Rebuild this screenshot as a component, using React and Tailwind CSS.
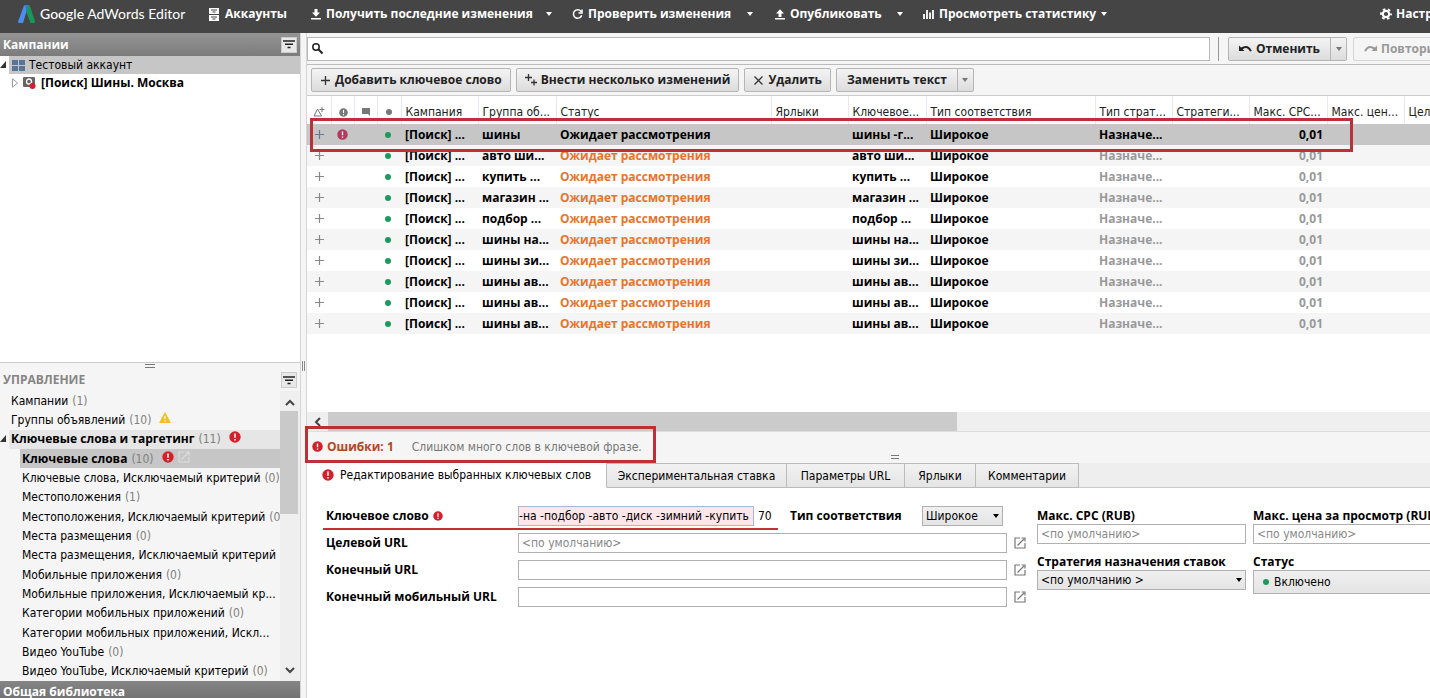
import React from 'react';

const groups = ['шины', 'авто ши...', 'купить ...', 'магазин ...', 'подбор ...', 'шины на...', 'шины зи...', 'шины ав...', 'шины ав...', 'шины ав...'];
const keywords = ['шины -г...', 'авто ши...', 'купить ...', 'магазин ...', 'подбор ...', 'шины на...', 'шины зи...', 'шины ав...', 'шины ав...', 'шины ав...'];

const manageItems = [
  { title: 'Кампании', count: '(1)' },
  { title: 'Группы объявлений', count: '(10)', warning: true },
  { title: 'Ключевые слова и таргетинг', count: '(11)', error: true, open: true },
  { title: 'Ключевые слова', count: '(10)', error: true, selected: true, nested: true },
  { title: 'Ключевые слова, Исключаемый критерий', count: '(0)', nested: true },
  { title: 'Местоположения', count: '(1)', nested: true },
  { title: 'Местоположения, Исключаемый критерий', count: '(0)', nested: true },
  { title: 'Места размещения', count: '(0)', nested: true },
  { title: 'Места размещения, Исключаемый критерий', count: '(0)', nested: true },
  { title: 'Мобильные приложения', count: '(0)', nested: true },
  { title: 'Мобильные приложения, Исключаемый кр...', nested: true },
  { title: 'Категории мобильных приложений', count: '(0)', nested: true },
  { title: 'Категории мобильных приложений, Искл...', nested: true },
  { title: 'Видео YouTube', count: '(0)', nested: true },
  { title: 'Видео YouTube, Исключаемый критерий', count: '(0)', nested: true },
];

function ErrorIcon({ className = 'size-3', color = '#d3202b' }) {
  return (
    <svg viewBox="0 0 12 12" className={`shrink-0 ${className}`}>
      <circle cx="6" cy="6" r="5.7" fill={color} />
      <path d="M6 2.6v4.2M6 8.1v1.5" stroke="#fff" strokeWidth="1.5" />
    </svg>
  );
}

function Caret({ className = '' }) {
  return (
    <svg viewBox="0 0 6 4" className={`w-[6px] h-1 shrink-0 ${className}`}>
      <path d="M0 0h6L3 4z" fill="currentColor" />
    </svg>
  );
}

function FilterIcon() {
  return (
    <svg viewBox="0 0 12 9" className="w-3 h-[9px]">
      <path d="M0 1h12M2 4.2h8M4.5 7.4h3" stroke="#222" strokeWidth="1.5" />
    </svg>
  );
}

function ExternalIcon({ className = 'text-[#777]' }) {
  return (
    <svg viewBox="0 0 12 12" className={`size-3 shrink-0 ${className}`} fill="none" stroke="currentColor" strokeWidth="1.2">
      <path d="M6 1H1v10h10V6M3.500 8.500l6.500-6.500M7.500 1H11v3.500" />
    </svg>
  );
}

function Dot() {
  return <span className="block size-[6px] rounded-full bg-[#1a9a5c]" />;
}

function FilterButton({ label }) {
  return (
    <button type="button" aria-label={label} className="size-4 flex items-center justify-center bg-[#e8e8e8] border border-[#ccc]">
      <FilterIcon />
    </button>
  );
}

function TopBar() {
  return (
    <header className="h-[33px] shrink-0 flex items-center bg-[#454545] text-white font-bold pl-[18px] pb-[5px] overflow-hidden whitespace-nowrap">
      <div className="flex items-center w-[191px] shrink-0 font-['Lato',sans-serif] font-normal text-[14px]">
        <svg viewBox="0 0 17 18" className="w-[17px] h-[18px] mr-[5px]">
          <path d="M7.500 0h3L5 18H1.200Q-.3 18 .1 16.500L5.600 1.400Q6.200 0 7.500 0z" fill="#4b8df0" />
          <path d="M8 0h2.600q1 0 1.400 1L17 16.500q.2 1.500-1.200 1.500H12.500L8.300 7z" fill="#17975a" />
          <path d="M7.200 0h3.300L8.300 7z" fill="#3a78c9" />
        </svg>
        <span><span className="font-medium">Google</span> AdWords Editor</span>
      </div>
      <nav className="flex items-center shrink-0">
        <button type="button" className="flex items-center gap-[6px] w-[102px]">
          <svg viewBox="0 0 10 13" className="w-[10px] h-[13px]">
            <path d="M0 0h10v6H0zM0 7h10v6H0z" fill="#fff" />
            <path d="M2 2h6M2 9h6" stroke="#454545" strokeWidth="1" />
            <path d="M3.500 4h3M3.500 11h3" stroke="#454545" strokeWidth="1.200" />
          </svg>
          Аккаунты
        </button>
        <button type="button" className="flex items-center gap-[5px] w-[235px]">
          <svg viewBox="0 0 10 11" className="w-[10px] h-[11px]">
            <path d="M3.500 0h3v3.500H9L5 7.800 1 3.500h2.500zM0 9h10v1.600H0z" fill="#fff" />
          </svg>
          Получить последние изменения
        </button>
        <Caret className="mr-5" />
        <button type="button" className="flex items-center gap-[5px] w-[175px]">
          <svg viewBox="0 0 11 11" className="size-[11px]" fill="none" stroke="#fff" strokeWidth="1.500">
            <path d="M9 2.500A4.200 4.200 0 1 0 9.700 6.200M10 .5v3.500H6.500" />
          </svg>
          Проверить изменения
        </button>
        <Caret className="mr-[22px]" />
        <button type="button" className="flex items-center gap-[5px] w-[122px]">
          <svg viewBox="0 0 10 11" className="w-[10px] h-[11px]">
            <path d="M3.500 8h3V4.500H9L5 .2 1 4.500h2.500zM0 9h10v1.600H0z" fill="#fff" />
          </svg>
          Опубликовать
        </button>
        <Caret className="mr-5" />
        <button type="button" className="flex items-center gap-[5px]">
          <svg viewBox="0 0 11 10" className="w-[11px] h-[10px]">
            <path d="M1 10V5M4 10V1M7 10V3.500M10 10V1" stroke="#fff" strokeWidth="1.800" />
          </svg>
          Просмотреть статистику
          <Caret />
        </button>
      </nav>
      <div className="w-[50px] ml-auto shrink-0 overflow-hidden">
        <button type="button" className="flex items-center gap-1">
          <svg viewBox="0 0 12 12" className="size-3 shrink-0" fill="none" stroke="#fff">
            <circle cx="6" cy="6" r="3.200" strokeWidth="2.200" />
            <circle cx="6" cy="6" r="5" strokeWidth="1.800" strokeDasharray="2.600 2.636" strokeDashoffset="1.300" />
          </svg>
          Настройки
        </button>
      </div>
    </header>
  );
}

function CampaignTree() {
  return (
    <section className="flex-1 min-h-0 bg-white">
      <h2 className="h-[23px] flex items-center justify-between px-[3px] font-bold text-white bg-linear-to-b from-[#949494] to-[#7c7c7c]">
        Кампании
        <FilterButton label="Фильтр кампаний" />
      </h2>
      <div className="flex h-[18px]">
        <svg viewBox="0 0 9 18" className="w-[9px]"><path d="M6 5v7H0z" fill="#333" /></svg>
        <button type="button" className="flex-1 flex items-center gap-1 pl-[3px] bg-[#c6c6c6]">
          <svg viewBox="0 0 13 11" className="w-[13px] h-[11px]">
            <path d="M0 0h6v5H0zM7 0h6v5H7zM0 6h6v5H0zM7 6h6v5H7z" fill="#587597" />
          </svg>
          Тестовый аккаунт
        </button>
      </div>
      <button type="button" className="flex items-center h-[18px] pl-3 font-bold">
        <svg viewBox="0 0 6 10" className="w-[6px] h-[10px] mr-[5px]"><path d="M.5.800v8.400L5.500 5z" fill="#fff" stroke="#999" /></svg>
        <svg viewBox="0 0 14 13" className="w-[14px] h-[13px] mr-1">
          <rect width="12" height="10" rx="1" fill="#666" />
          <circle cx="6" cy="4.500" r="2.500" fill="none" stroke="#fff" strokeWidth="1.300" />
          <circle cx="9.500" cy="9" r="3" fill="#d3202b" />
        </svg>
        [Поиск] Шины. Москва
      </button>
    </section>
  );
}

function ManageItem({ item }) {
  return (
    <li className={`flex-1 min-h-0 flex ${item.nested ? 'pl-5' : ''}`}>
      {!item.nested && (
        <svg viewBox="0 0 9 18" className="w-[9px] h-[18px] shrink-0">
          {item.open && <path d="M6 5v7H0z" fill="#333" />}
        </svg>
      )}
      <button
        type="button"
        className={`flex-1 flex items-center gap-1 pl-[2px] text-left whitespace-nowrap overflow-hidden ${item.selected ? 'bg-[#c6c6c6]' : ''} ${item.open ? 'bg-[#e6e6e6]' : ''}`}
      >
        <span className={item.open || item.selected ? 'font-bold' : ''}>{item.title}</span>
        {item.count && <span className="text-[#808080]">{item.count}</span>}
        {item.warning && (
          <svg viewBox="0 0 12 11" className="w-3 h-[11px] ml-1 mb-1 shrink-0">
            <path d="M6 0l6 11H0z" fill="#f9be1c" />
            <path d="M6 4v3M6 8v1.500" stroke="#fff" strokeWidth="1.200" />
          </svg>
        )}
        {item.error && <ErrorIcon className="size-3 ml-1 mb-1" />}
        {item.selected && <ExternalIcon className="mb-1 text-[#ddd]" />}
      </button>
    </li>
  );
}

function ManagePanel() {
  return (
    <section className="h-[336px] shrink-0 flex flex-col bg-[#f5f5f5] border-t border-[#ccc]">
      <div className="h-[6px] flex justify-center items-center">
        <span className="w-[10px] h-1 border-y border-[#777]" />
      </div>
      <h2 className="h-[22px] flex items-center justify-between px-[3px] font-bold text-[#858585]">
        УПРАВЛЕНИЕ
        <FilterButton label="Фильтр разделов" />
      </h2>
      <div className="flex-1 min-h-0 flex">
        <ul className="flex-1 min-w-0 flex flex-col">
          {manageItems.map((item) => (
            <ManageItem key={item.title} item={item} />
          ))}
        </ul>
        <div className="w-5 flex flex-col bg-[#efefef]">
          <svg viewBox="0 0 20 20" className="size-5"><path d="M6 14l4-4 4 4" fill="none" stroke="#444" strokeWidth="2" /></svg>
          <div className="w-[18px] h-[103px] bg-[#c9c9c9]" />
          <svg viewBox="0 0 20 20" className="size-5 mt-auto"><path d="M6 7l4 4 4-4" fill="none" stroke="#444" strokeWidth="2" /></svg>
        </div>
      </div>
      <h2 className="h-[17px] flex items-center pt-1 pl-[3px] font-bold text-white bg-linear-to-b from-[#858585] to-[#737373]">
        Общая библиотека
      </h2>
    </section>
  );
}

function ToolButton({ icon, children }) {
  return (
    <button type="button" className="h-6 flex items-center gap-1 px-2 font-bold text-[#222] border border-[#b5b5b5] rounded-xs bg-linear-to-b from-[#f4f4f4] to-[#dcdcdc]">
      {icon}
      {children}
    </button>
  );
}

function SplitButton({ icon, children, menuLabel }) {
  return (
    <div className="h-6 flex shrink-0 border border-[#b5b5b5] rounded-xs bg-linear-to-b from-[#f4f4f4] to-[#dcdcdc] font-bold text-[#222]">
      <button type="button" className="flex items-center gap-1 px-[10px]">
        {icon}
        {children}
      </button>
      <button type="button" aria-label={menuLabel} className="w-4 flex items-center justify-center border-l border-[#b5b5b5] text-[#777]">
        <Caret />
      </button>
    </div>
  );
}

function UndoIcon({ flipped }) {
  return (
    <svg viewBox="0 0 13 8" className={`w-[13px] h-2 ${flipped ? '-scale-x-100' : ''}`}>
      <path d="M0 .5V6h5.500L3.700 4.300Q8 .8 11 6.500L12.800 6Q9.300-2 2 2.600z" fill="currentColor" />
    </svg>
  );
}

function SearchRow() {
  return (
    <div className="h-8 flex items-center border-b border-[#bbb] overflow-hidden whitespace-nowrap">
      <label className="flex-1 min-w-0 h-6 flex items-center pl-1 bg-white border border-[#b8b8b8]">
        <svg viewBox="0 0 11 11" className="size-[11px]" fill="none" stroke="#222">
          <circle cx="4" cy="4" r="3.200" strokeWidth="1.500" />
          <path d="M6.500 6.500L10.500 10.500" strokeWidth="2" />
        </svg>
        <input type="text" aria-label="Поиск" className="flex-1 outline-none px-1" />
      </label>
      <span className="w-px h-6 bg-[#999] ml-2 mr-[9px]" />
      <SplitButton icon={<UndoIcon />} menuLabel="История отмены">Отменить</SplitButton>
      <div className="w-[77px] ml-[6px] shrink-0 overflow-hidden">
        <button type="button" disabled className="h-6 w-[118px] flex items-center gap-1 px-[10px] font-bold text-[#999] border border-[#d5d5d5] rounded-xs">
          <UndoIcon flipped />
          Повторить
        </button>
      </div>
    </div>
  );
}

function Toolbar() {
  return (
    <div className="h-[31px] flex items-center gap-[5px] pl-1 border-b border-[#ccc] whitespace-nowrap">
      <ToolButton icon={<svg viewBox="0 0 11 11" className="size-[11px]"><path d="M5.500 1v9M1 5.500h9" stroke="#333" strokeWidth="1.300" /></svg>}>
        Добавить ключевое слово
      </ToolButton>
      <ToolButton icon={<svg viewBox="0 0 12 12" className="size-3"><path d="M3.500 0v7M0 3.500h7M9 5.500v6M6 8.500h6" stroke="#333" strokeWidth="1.300" /></svg>}>
        Внести несколько изменений
      </ToolButton>
      <ToolButton icon={<svg viewBox="0 0 11 11" className="size-[11px]"><path d="M1.500 1.500l8 8M9.500 1.500l-8 8" stroke="#333" strokeWidth="1.300" /></svg>}>
        Удалить
      </ToolButton>
      <SplitButton menuLabel="Другие замены">Заменить текст</SplitButton>
    </div>
  );
}

function KeywordTable() {
  return (
    <div className="relative flex-1 min-h-0 overflow-hidden bg-white">
      <table className="table-fixed w-[1174px] border-collapse text-left whitespace-nowrap [&_td]:p-0 [&_th]:p-0 [&_td]:pl-1 [&_th]:pl-1 [&_th]:pt-1 [&_th]:font-normal [&_th]:border-r [&_th]:border-[#e4e8f0] [&_td]:overflow-hidden [&_th]:overflow-hidden">
        <colgroup>
          <col className="w-6" />
          <col className="w-[23px]" />
          <col className="w-[23px]" />
          <col className="w-6" />
          <col className="w-[77px]" />
          <col className="w-[78px]" />
          <col className="w-[215px]" />
          <col className="w-[77px]" />
          <col className="w-[78px]" />
          <col className="w-[169px]" />
          <col className="w-[77px]" />
          <col className="w-[77px]" />
          <col className="w-[78px]" />
          <col className="w-[77px]" />
          <col className="w-[77px]" />
        </colgroup>
        <thead>
          <tr className="h-7 text-[#222]">
            <th aria-label="Изменения">
              <svg viewBox="0 0 12 10" className="w-3 h-[10px] ml-[2px]" fill="none" stroke="#777">
                <path d="M4.500 2L1 9h7.500z" />
                <path d="M9 0v5M6.500 2.500h5" />
              </svg>
            </th>
            <th aria-label="Ошибки"><ErrorIcon className="size-[9px] ml-[3px]" color="#777" /></th>
            <th aria-label="Комментарии">
              <svg viewBox="0 0 8 8" className="size-2 ml-[3px]"><path d="M0 0h8v8L6 6H0z" fill="#777" /></svg>
            </th>
            <th aria-label="Состояние"><span className="block size-[6px] ml-1 rounded-full bg-[#777]" /></th>
            <th>Кампания</th>
            <th>Группа об...</th>
            <th>Статус</th>
            <th>Ярлыки</th>
            <th>Ключевое...</th>
            <th>Тип соответствия</th>
            <th>Тип страт...</th>
            <th>Стратеги...</th>
            <th>Макс. CPC...</th>
            <th>Макс. цен...</th>
            <th>Целевая</th>
          </tr>
        </thead>
        <tbody className="font-bold">
          {groups.map((group, i) => (
            <tr key={i} className={`h-[21px] ${i === 0 ? 'bg-[#c6c6c6]' : i % 2 ? 'bg-[#f5f5f5]' : 'bg-white'}`}>
              <td>
                <svg viewBox="0 0 9 9" className="size-[9px] ml-1">
                  <path d="M4.500 0v9M0 4.500h9" stroke={i === 0 ? '#6a7896' : '#888'} strokeWidth="1.200" />
                </svg>
              </td>
              <td>{i === 0 && <ErrorIcon className="size-[11px] ml-[2px]" color="#b23a5e" />}</td>
              <td />
              <td><div className="pl-1"><Dot /></div></td>
              <td>[Поиск] ...</td>
              <td>{group}</td>
              <td className={i === 0 ? '' : 'text-[#e8742c]'}>Ожидает рассмотрения</td>
              <td />
              <td>{keywords[i]}</td>
              <td>Широкое</td>
              <td className={i === 0 ? '' : 'text-[#999]'}>Назначе...</td>
              <td />
              <td className={i === 0 ? '' : 'text-[#999]'}><div className="text-right pr-1">0,01</div></td>
              <td />
              <td />
            </tr>
          ))}
        </tbody>
      </table>
      <div className="absolute left-[3px] top-[22px] w-[1043px] h-[34px] border-3 border-[#bd3039]" />
    </div>
  );
}

function ErrorBar() {
  return (
    <div className="relative h-8 flex items-center pl-[5px] pb-[2px] bg-[#f5f5f5] border-t border-[#ddd]">
      <ErrorIcon className="size-[11px] mr-1" />
      <span className="font-bold text-[#b5451f]">Ошибки: 1</span>
      <span className="ml-[18px] text-[#777]">Слишком много слов в ключевой фразе.</span>
      <div className="absolute -left-[2px] -top-[6px] w-[351px] h-[37px] border-3 border-[#bd3039]" />
      <span className="absolute left-[584px] bottom-1 w-2 h-1 border-y border-[#777]" />
    </div>
  );
}

function Tabs() {
  return (
    <div role="tablist" className="h-[25px] flex items-stretch bg-[#eee] whitespace-nowrap [&>button]:border-b [&>button]:border-[#bbb]">
      <button type="button" role="tab" aria-selected="true" className="w-[300px] flex items-center gap-[6px] pl-[15px] bg-white border-b-white! border-r">
        <ErrorIcon className="size-3" />
        Редактирование выбранных ключевых слов
      </button>
      <button type="button" role="tab" className="w-[180px] border-t border-r bg-linear-to-b from-[#f2f2f2] to-[#e4e4e4]">Экспериментальная ставка</button>
      <button type="button" role="tab" className="w-[118px] border-t border-r bg-linear-to-b from-[#f2f2f2] to-[#e4e4e4]">Параметры URL</button>
      <button type="button" role="tab" className="w-[71px] border-t border-r bg-linear-to-b from-[#f2f2f2] to-[#e4e4e4]">Ярлыки</button>
      <button type="button" role="tab" className="w-[103px] border-t border-r bg-linear-to-b from-[#f2f2f2] to-[#e4e4e4]">Комментарии</button>
      <span className="flex-1 border-b border-[#ccc]" />
    </div>
  );
}

function SelectBox({ id, value, className = '' }) {
  return (
    <div className={`relative ${className}`}>
      <select id={id} className="block w-full h-5 appearance-none pl-[3px] border border-[#b0b0b0] bg-linear-to-b from-[#f0f0f0] to-[#e4e4e4]">
        <option>{value}</option>
      </select>
      <Caret className="absolute right-1 top-2" />
    </div>
  );
}

function UrlField({ id, label, placeholder }) {
  return (
    <div className="flex items-center h-5">
      <label htmlFor={id} className="w-[192px] font-bold">{label}</label>
      <input id={id} type="text" placeholder={placeholder} className="w-[489px] h-5 px-[3px] border border-[#b0b0b0] placeholder:text-[#888] mr-[7px]" />
      <ExternalIcon />
    </div>
  );
}

function EditForm() {
  return (
    <form className="h-[210px] flex pl-[19px] pt-[18px] bg-white overflow-hidden whitespace-nowrap">
      <div className="w-[711px] shrink-0 flex flex-col gap-[7px]">
        <div className="relative flex items-center h-5">
          <label htmlFor="keyword" className="w-[192px] flex items-center gap-1 font-bold">
            Ключевое слово
            <ErrorIcon className="size-[10px]" />
          </label>
          <input
            id="keyword"
            type="text"
            defaultValue="-на -подбор -авто -диск -зимний -купить"
            className="w-[236px] h-5 border border-[#a9b8cc] bg-[#fde6e9]"
          />
          <span className="w-9 pl-1">70</span>
          <label htmlFor="match" className="w-[132px] font-bold">Тип соответствия</label>
          <SelectBox id="match" value="Широкое" className="w-[81px]" />
          <div className="absolute -left-[3px] -bottom-1 w-[455px] h-[2px] bg-[#c4303a]" />
        </div>
        <UrlField id="target-url" label="Целевой URL" placeholder="<по умолчанию>" />
        <UrlField id="final-url" label="Конечный URL" />
        <UrlField id="mobile-url" label="Конечный мобильный URL" />
      </div>
      <div className="w-[209px] shrink-0 mr-[7px]">
        <label htmlFor="max-cpc" className="block h-[18px] leading-5 font-bold">Макс. CPC (RUB)</label>
        <input id="max-cpc" type="text" placeholder="<по умолчанию>" className="block w-full h-5 px-[3px] border border-[#b0b0b0] placeholder:text-[#888]" />
        <label htmlFor="strategy" className="block h-[18px] mt-2 leading-5 font-bold">Стратегия назначения ставок</label>
        <SelectBox id="strategy" value="<по умолчанию >" />
      </div>
      <div className="flex-1 min-w-0 overflow-hidden">
        <label htmlFor="max-cpv" className="block h-[18px] leading-5 font-bold">Макс. цена за просмотр (RUB)</label>
        <input id="max-cpv" type="text" placeholder="<по умолчанию>" className="block w-[209px] h-5 px-[3px] border border-[#b0b0b0] placeholder:text-[#888]" />
        <label htmlFor="status" className="block h-[18px] mt-2 leading-5 font-bold">Статус</label>
        <div className="relative w-[209px]">
          <select id="status" className="block w-full h-6 appearance-none pl-5 border border-[#b0b0b0] bg-linear-to-b from-[#f0f0f0] to-[#e4e4e4]">
            <option>Включено</option>
          </select>
          <span className="absolute left-[10px] top-[9px]"><Dot /></span>
        </div>
      </div>
    </form>
  );
}

export default function App() {
  return (
    <div className="h-screen flex flex-col overflow-hidden bg-[#f5f5f5] text-black text-[12px] leading-4 font-['DejaVu_Sans_Condensed','Noto_Sans',sans-serif] [&_.font-bold]:font-['Open_Sans',sans-serif]">
      <TopBar />
      <div className="flex-1 min-h-0 flex">
        <aside className="w-[300px] shrink-0 flex flex-col">
          <CampaignTree />
          <ManagePanel />
        </aside>
        <div className="w-[7px] shrink-0 flex items-center justify-center border-x border-[#d5d5d5]">
          <span className="w-[3px] h-[10px] border-x border-[#888]" />
        </div>
        <main className="flex-1 min-w-0 flex flex-col">
          <SearchRow />
          <Toolbar />
          <KeywordTable />
          <div className="h-[19px] flex bg-[#efefef]">
            <svg viewBox="0 0 21 19" className="w-[21px]"><path d="M13 6l-4 4 4 4" fill="none" stroke="#444" strokeWidth="2" /></svg>
            <div className="w-[56%] bg-[#cbcbcb]" />
          </div>
          <ErrorBar />
          <Tabs />
          <EditForm />
        </main>
      </div>
    </div>
  );
}
